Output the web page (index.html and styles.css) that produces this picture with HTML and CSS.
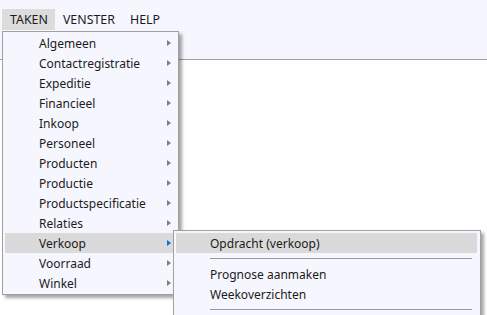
FILE: index.html
```html
<!DOCTYPE html>
<html>
<head>
<meta charset="utf-8">
<link rel="stylesheet" href="styles.css">
</head>
<body>
<header class="topbar">
  <nav class="menubar">
    <span class="mb-item active">TAKEN</span>
    <span class="mb-item">VENSTER</span>
    <span class="mb-item">HELP</span>
  </nav>
</header>
<main class="content"></main>

<div class="menu dropdown">
  <div class="mi"><span>Algemeen</span><i class="arr"></i></div>
  <div class="mi"><span>Contactregistratie</span><i class="arr"></i></div>
  <div class="mi"><span>Expeditie</span><i class="arr"></i></div>
  <div class="mi"><span>Financieel</span><i class="arr"></i></div>
  <div class="mi"><span>Inkoop</span><i class="arr"></i></div>
  <div class="mi"><span>Personeel</span><i class="arr"></i></div>
  <div class="mi"><span>Producten</span><i class="arr"></i></div>
  <div class="mi"><span>Productie</span><i class="arr"></i></div>
  <div class="mi"><span>Productspecificatie</span><i class="arr"></i></div>
  <div class="mi"><span>Relaties</span><i class="arr"></i></div>
  <div class="mi hl"><span>Verkoop</span><i class="arr blue"></i></div>
  <div class="mi"><span>Voorraad</span><i class="arr"></i></div>
  <div class="mi"><span>Winkel</span><i class="arr"></i></div>
</div>

<div class="menu submenu">
  <div class="mi hl"><span>Opdracht (verkoop)</span></div>
  <div class="sep"></div>
  <div class="mi"><span>Prognose aanmaken</span></div>
  <div class="mi"><span>Weekoverzichten</span></div>
  <div class="sep"></div>
</div>
</body>
</html>
```
FILE: styles.css
```css
html, body {
  margin: 0;
  padding: 0;
  background: #ffffff;
  font-family: "Noto Sans", "Open Sans", sans-serif;
  font-size: 12px;
  color: #1b1b1b;
  overflow: hidden;
}
body { width: 487px; height: 315px; position: relative; }

.topbar {
  height: 60px;
  background: #f5f6fe;
  border-bottom: 1px solid #a0a0a0;
  box-sizing: border-box;
  padding: 9px 0 0 2px;
}
.menubar { display: flex; }
.mb-item {
  height: 21px;
  line-height: 21px;
  padding: 0 7px 0 8px;
  font-size: 12.4px;
}
.mb-item.active { background: #dcdcdc; }

.menu {
  position: absolute;
  background: #f5f6fe;
  border: 1px solid #a0a0a0;
  box-shadow: 3px 3px 3px rgba(0,0,0,0.35);
  box-sizing: border-box;
}
.dropdown {
  left: 2px;
  top: 31px;
  width: 177px;
  padding: 1px 0;
}
.submenu {
  left: 173px;
  top: 230px;
  width: 308px;
  height: 100px;
  padding: 2px 0;
}
.mi {
  height: 20px;
  display: flex;
  align-items: center;
  justify-content: space-between;
  margin: 0 4px 0 2px;
  padding: 0 3px 0 34px;
}
.submenu .mi { margin: 0 3px 0 2px; }
.mi.hl { background: #dadada; }
.arr {
  width: 0; height: 0;
  border-left: 4px solid #808080;
  border-top: 3.5px solid transparent;
  border-bottom: 3.5px solid transparent;
}
.arr.blue { border-left-color: #0078d7; }
.sep {
  height: 11px;
  display: flex;
  align-items: center;
  padding: 0 8px 0 36px;
}
.sep::before {
  content: "";
  flex: 1;
  height: 1px;
  background: #9a9a9a;
}
```
